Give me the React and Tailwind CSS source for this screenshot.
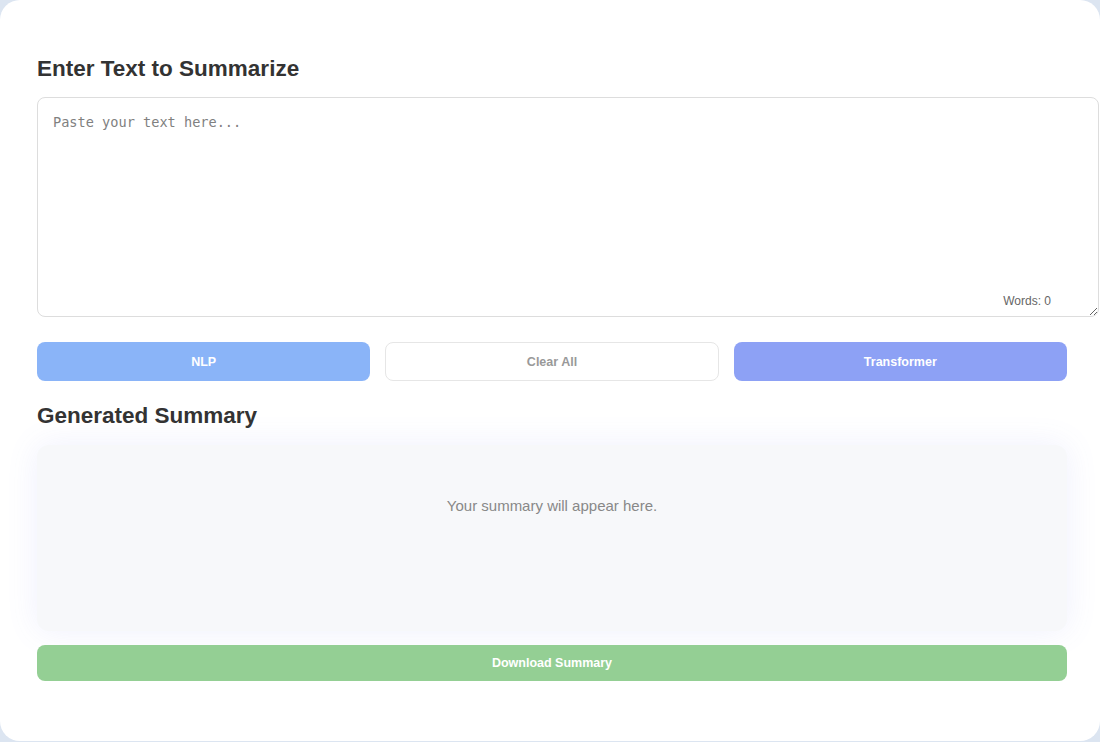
import { useState } from 'react';

const App = () => {
  const [text, setText] = useState('')
  const words = text.trim() ? text.trim().split(/\s+/).length : 0

  return (
    <div className="min-h-[742px] w-[1100px] bg-[#dce5f1] font-['Liberation_Sans',Arial,sans-serif]">
      <div className="h-[741px] w-[1100px] rounded-[20px] bg-white pt-[53px] pl-[37px]">
        <h2 className="text-[22.5px] leading-[31px] font-bold text-[#333] mb-[13px]">Enter Text to Summarize</h2>

        <div className="relative w-[1062px]">
          <textarea
            value={text}
            onChange={(e) => setText(e.target.value)}
            placeholder="Paste your text here..."
            className="block w-full h-[220px] rounded-lg border border-[#ddd] bg-white px-[15px] pt-[16px] pb-[15px] font-['DejaVu_Sans_Mono',monospace] text-[13.6px] leading-[17px] text-[#333] placeholder:text-[#808080] outline-none"
          />
          <span className="absolute bottom-[7px] right-[48px] text-[12px] text-[#666]">Words: {words}</span>
        </div>

        <div className="grid grid-cols-3 gap-[15px] w-[1030px] mt-[25px]">
          <button className="h-[39px] pt-[2px] rounded-lg bg-[#8ab4f8] text-white font-bold text-[12.5px]">NLP</button>
          <button className="h-[39px] pt-[2px] rounded-lg border border-[#e6e6e6] bg-white text-[#999] font-bold text-[12.5px]">Clear All</button>
          <button className="h-[39px] pt-[2px] rounded-lg bg-[#8da1f5] text-white font-bold text-[12.5px]">Transformer</button>
        </div>

        <h2 className="text-[22.5px] leading-[32px] font-bold text-[#333] mt-[19px] mb-[13px]">Generated Summary</h2>

        <div className="w-[1030px] h-[186px] rounded-xl bg-[#f7f8fa] pt-[52px] text-center shadow-[0_0_32px_rgba(110,120,240,0.11)]">
          <p className="text-[15px] leading-[18px] text-[#888]">Your summary will appear here.</p>
        </div>

        <button className="mt-[14px] w-[1030px] h-[36px] rounded-lg bg-[#94cf94] text-white font-bold text-[12.5px]">Download Summary</button>
      </div>
    </div>
  )
}

export default App
